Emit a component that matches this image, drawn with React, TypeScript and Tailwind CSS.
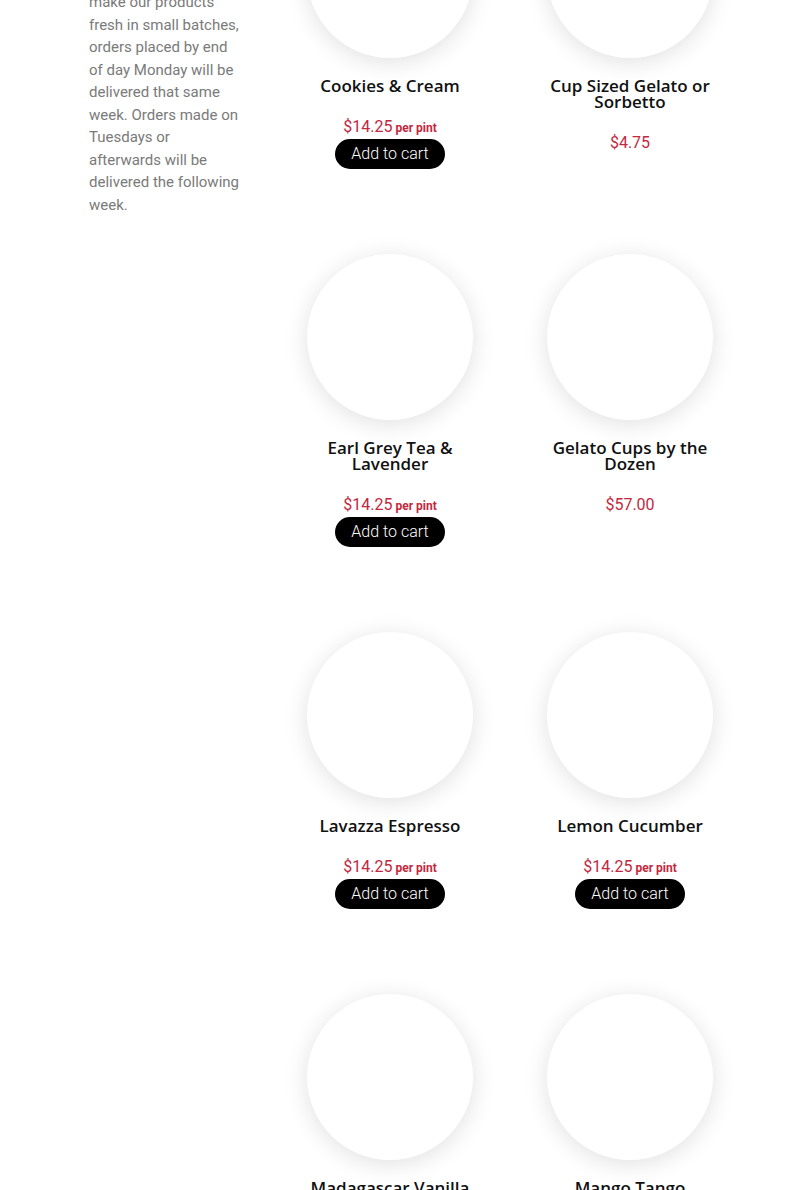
import React from "react";

type Product = {
  name: string;
  price: string;
  perPint?: boolean;
};

const products: Product[] = [
  { name: "Cookies & Cream", price: "$14.25", perPint: true },
  { name: "Cup Sized Gelato or Sorbetto", price: "$4.75" },
  { name: "Earl Grey Tea & Lavender", price: "$14.25", perPint: true },
  { name: "Gelato Cups by the Dozen", price: "$57.00" },
  { name: "Lavazza Espresso", price: "$14.25", perPint: true },
  { name: "Lemon Cucumber", price: "$14.25", perPint: true },
  { name: "Madagascar Vanilla", price: "$14.25", perPint: true },
  { name: "Mango Tango", price: "$14.25", perPint: true },
];

function ProductCard({ product }: { product: Product }) {
  return (
    <div className="flex flex-col items-center">
      <div className="w-[166px] h-[166px] rounded-full bg-white shadow-[0_4px_24px_rgba(0,0,0,0.12)]" />
      <h2 className="mt-[20px] w-[180px] text-center text-[17px] leading-4 font-semibold text-[#111] font-['Open_Sans',sans-serif]">
        {product.name}
      </h2>
      <div className="mt-[21px] flex items-baseline justify-center leading-6 text-[#c3283f] font-['Roboto',sans-serif]">
        <span className="text-base">{product.price}</span>
        {product.perPint && (
          <span className="ml-[3px] text-xs font-bold">per pint</span>
        )}
      </div>
      {product.perPint && (
        <button className="h-[30px] rounded-full bg-black px-4 text-base font-light leading-[30px] text-white font-['Roboto',sans-serif]">
          Add to cart
        </button>
      )}
    </div>
  );
}

export default function App() {
  return (
    <div className="h-[1190px] w-full overflow-hidden bg-white">
      <div className="flex">
        {/* Sidebar note */}
        <aside className="ml-[89px] mt-[-9px] w-[152px] shrink-0">
          <p className="text-[15px] leading-[22.5px] text-[#7a7a7a] font-['Roboto',sans-serif]">
            make our products fresh in small batches, orders placed by end of
            day Monday will be delivered that same week. Orders made on
            Tuesdays or afterwards will be delivered the following week.
          </p>
        </aside>

        {/* Product grid */}
        <main className="ml-[29px] mt-[-108px] grid w-[480px] grid-cols-2 items-start gap-y-[85px]">
          {products.map((p) => (
            <ProductCard key={p.name} product={p} />
          ))}
        </main>
      </div>
    </div>
  );
}
